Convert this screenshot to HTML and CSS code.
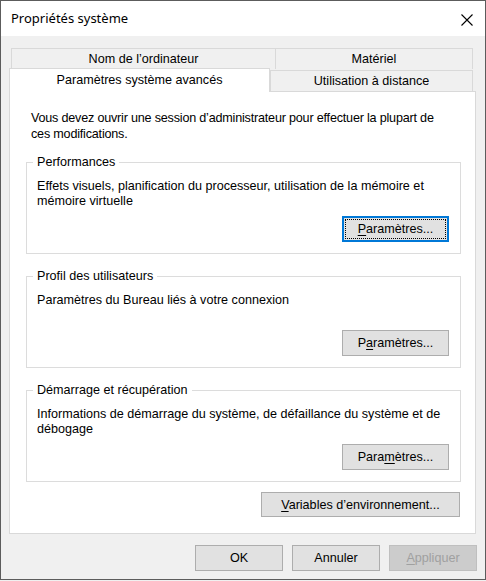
FILE: index.html
```html
<!DOCTYPE html>
<html lang="fr">
<head>
<meta charset="utf-8">
<title>Propriétés système</title>
<link rel="stylesheet" href="styles.css">
</head>
<body>
<div class="window">
  <div class="titlebar">
    <span class="title">Propriétés système</span>
    <svg class="close" width="12" height="12" viewBox="0 0 12 12"><path d="M0.5 0.5 L11.5 11.5 M11.5 0.5 L0.5 11.5" stroke="#000" stroke-width="1.1" fill="none"/></svg>
  </div>
  <div class="client">
    <div class="tabs">
      <div class="tab-row back">
        <div class="tab t-nom">Nom de l’ordinateur</div>
        <div class="tab t-mat">Matériel</div>
      </div>
      <div class="tab-row front">
        <div class="tab active">Paramètres système avancés</div>
        <div class="tab t-util">Utilisation à distance</div>
      </div>
    </div>
    <div class="panel">
      <p class="intro">Vous devez ouvrir une session d’administrateur pour effectuer la plupart de ces modifications.</p>

      <fieldset class="group">
        <legend>Performances</legend>
        <div class="group-body">
          <p class="group-text">Effets visuels, planification du processeur, utilisation de la mémoire et mémoire virtuelle</p>
          <button class="btn btn-group default"><u>P</u>aramètres...</button>
        </div>
      </fieldset>

      <fieldset class="group">
        <legend>Profil des utilisateurs</legend>
        <div class="group-body">
          <p class="group-text">Paramètres du Bureau liés à votre connexion</p>
          <button class="btn btn-group">P<u>a</u>ramètres...</button>
        </div>
      </fieldset>

      <fieldset class="group">
        <legend>Démarrage et récupération</legend>
        <div class="group-body">
          <p class="group-text">Informations de démarrage du système, de défaillance du système et de débogage</p>
          <button class="btn btn-group">Para<u>m</u>ètres...</button>
        </div>
      </fieldset>

      <button class="btn btn-env"><u>V</u>ariables d’environnement...</button>
    </div>
    <div class="actions">
      <button class="btn btn-action">OK</button>
      <button class="btn btn-action">Annuler</button>
      <button class="btn btn-action disabled"><u>A</u>ppliquer</button>
    </div>
  </div>
</div>
</body>
</html>
```

FILE: styles.css
```css
html, body {
  margin: 0;
  padding: 0;
  background: #f0f0f0;
}

.window {
  width: 486px;
  height: 580px;
  box-sizing: border-box;
  border: 1px solid #5c5c5c;
  background: #f0f0f0;
  font-family: "Liberation Sans", Arial, sans-serif;
  font-size: 12.6px;
  color: #000;
}

.titlebar {
  height: 35px;
  background: #fff;
  display: flex;
  align-items: center;
  justify-content: space-between;
  padding: 0 12px 0 10px;
}

.title {
  font-family: "Noto Sans", "Open Sans", sans-serif;
  font-size: 13px;
  color: #000;
  margin-top: -1px;
}

.close {
  display: block;
  margin-top: 2px;
}

.client {
  padding: 12px 0 0 8px;
}

.tab-row {
  display: flex;
}

.tab {
  box-sizing: border-box;
  border: 1px solid #d9d9d9;
  border-bottom: none;
  background: #f0f0f0;
  text-align: center;
  line-height: 21px;
  white-space: nowrap;
}

.back {
  margin-left: 2px;
}

.t-nom {
  width: 265px;
  height: 21px;
}

.t-mat {
  width: 198px;
  height: 21px;
  margin-left: -1px;
}

.front {
  margin-top: -1px;
  align-items: flex-end;
}

.active {
  width: 261px;
  height: 24px;
  background: #fff;
  position: relative;
  z-index: 1;
  margin-bottom: -1px;
  line-height: 22px;
}

.t-util {
  width: 203px;
  height: 21px;
  line-height: 21px;
}

.panel {
  width: 467px;
  height: 443px;
  box-sizing: border-box;
  border: 1px solid #d9d9d9;
  background: #fff;
  padding: 18px 0 0 0;
  display: flex;
  flex-direction: column;
}

.intro {
  margin: 0 0 13px 21px;
  width: 416px;
  line-height: 16px;
  letter-spacing: -0.2px;
}

.group {
  margin: 0 0 15px 16px;
  width: 435px;
  box-sizing: border-box;
  border: 1px solid #dcdcdc;
  padding: 9px 11px 11px 10px;
  min-width: 0;
}

.group legend {
  padding: 0 4px;
  margin-left: -4px;
  line-height: 15px;
}

.group-body {
  height: 63px;
  display: flex;
  flex-direction: column;
}

.group-text {
  margin: 0;
  line-height: 15px;
}

.btn {
  font-family: "Liberation Sans", Arial, sans-serif;
  font-size: 12.6px;
  color: #000;
  background: #e1e1e1;
  border: 1px solid #adadad;
  box-sizing: border-box;
  height: 25px;
  padding: 0;
  margin: 0;
}

.btn u {
  text-underline-offset: 2px;
}

.btn-group {
  width: 107px;
  height: 26px;
  margin-top: auto;
  align-self: flex-end;
}

.default {
  border: 1px solid #0078d7;
  box-shadow: inset 0 0 0 1px #0078d7;
  outline: 1px dotted #000;
  outline-offset: -4px;
}

.btn-env {
  width: 199px;
  align-self: flex-end;
  margin: -5px 15px 0 0;
}

.actions {
  display: flex;
  justify-content: flex-end;
  gap: 9px;
  padding: 11px 8px 0 0;
}

.btn-action {
  width: 88px;
  height: 26px;
}

.disabled {
  background: #cccccc;
  border-color: #bfbfbf;
  color: #a0a0a0;
}
```
